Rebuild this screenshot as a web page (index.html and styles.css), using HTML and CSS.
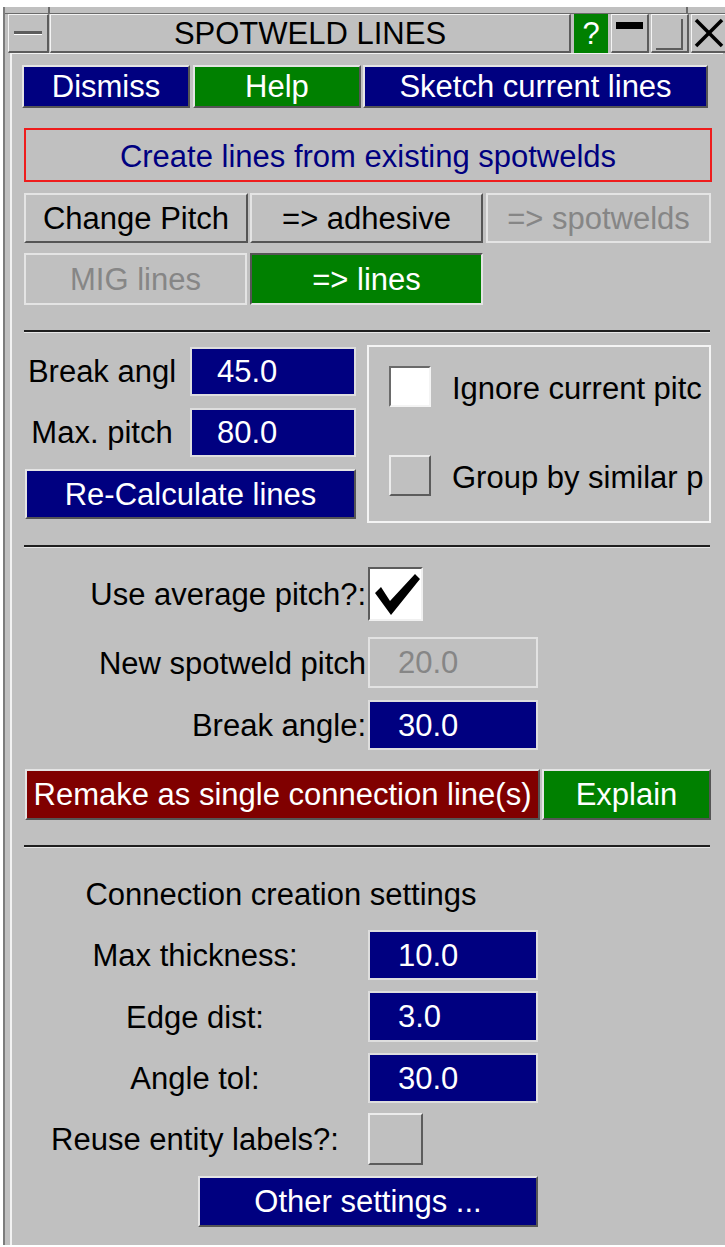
FILE: index.html
```html
<!doctype html>
<html lang="en">
<head>
  <meta charset="utf-8">
  <title>Spotweld Lines</title>
<link rel="stylesheet" href="styles.css">
</head>
<body>
<div class="frame">
  <div class="frame-top">
    <span class="seg seg-left"></span>
    <span class="seg seg-mid"></span>
    <span class="seg seg-right"></span>
  </div>

  <div class="titlebar">
    <div class="tb-box tb-menu"><span class="dash"></span></div>
    <div class="tb-box tb-title">SPOTWELD LINES</div>
    <div class="tb-box tb-help">?</div>
    <div class="tb-box tb-min"><span class="bar"></span></div>
    <div class="tb-box tb-max"><span class="sq"></span></div>
    <div class="tb-box tb-close">
      <svg width="30" height="30" viewBox="0 0 30 30">
        <line x1="2" y1="2" x2="28" y2="28" stroke="#000" stroke-width="3.5"/>
        <line x1="28" y1="2" x2="2" y2="28" stroke="#000" stroke-width="3.5"/>
      </svg>
    </div>
  </div>

  <div class="panel">
    <div class="toolbar">
      <div class="btn blue w-dismiss">Dismiss</div>
      <div class="btn green w-help">Help</div>
      <div class="btn blue w-sketch">Sketch current lines</div>
    </div>

    <div class="banner">Create lines from existing spotwelds</div>

    <div class="btn-row row-a">
      <div class="btn grey w-change">Change Pitch</div>
      <div class="btn grey w-adh">=&gt; adhesive</div>
      <div class="btn off w-spot">=&gt; spotwelds</div>
    </div>
    <div class="btn-row row-b">
      <div class="btn off w-mig">MIG lines</div>
      <div class="btn green pressed w-lines">=&gt; lines</div>
    </div>

    <div class="sep sep-1"></div>

    <div class="calc">
      <div class="calc-left">
        <div class="calc-label">Break angl</div>
        <div class="field blue h49">45.0</div>
        <div class="calc-label">Max. pitch</div>
        <div class="field blue h49">80.0</div>
        <div class="btn blue recalc">Re-Calculate lines</div>
      </div>
      <div class="group">
        <div class="group-row">
          <span class="check white"></span>
          <span class="group-text">Ignore current pitc</span>
        </div>
        <div class="group-row second">
          <span class="check raised"></span>
          <span class="group-text">Group by similar p</span>
        </div>
      </div>
    </div>

    <div class="sep sep-2"></div>

    <div class="pitch">
      <div class="lbl-right">Use average pitch?:</div>
      <div class="tick-box">
        <svg width="51" height="50" viewBox="0 0 51 50">
          <polygon points="5,24 11,18 20,32 45,5 50,10 21,46" fill="#000"/>
        </svg>
      </div>
      <div class="lbl-right r2">New spotweld pitch</div>
      <div class="field off-field r2 h51">20.0</div>
      <div class="lbl-right r3">Break angle:</div>
      <div class="field blue r3 h50">30.0</div>
    </div>

    <div class="remake-row">
      <div class="btn red w-remake">Remake as single connection line(s)</div>
      <div class="btn green w-explain">Explain</div>
    </div>

    <div class="sep sep-3"></div>

    <div class="settings">
      <div class="settings-title">Connection creation settings</div>
      <div class="lbl-center s1">Max thickness:</div>
      <div class="field blue s1 h50">10.0</div>
      <div class="lbl-center s2">Edge dist:</div>
      <div class="field blue s2 h51">3.0</div>
      <div class="lbl-center s3">Angle tol:</div>
      <div class="field blue s3 h50">30.0</div>
      <div class="lbl-center s4">Reuse entity labels?:</div>
      <span class="check raised big s4"></span>
      <div class="btn blue other">Other settings ...</div>
    </div>
  </div>
</div>
</body>
</html>
```
FILE: styles.css
```css
* {
  box-sizing: border-box;
}

body {
  margin: 0;
  background: #fff;
  font-family: "Liberation Sans", Arial, sans-serif;
  font-size: 31px;
  color: #000;
  overflow: hidden;
}

/* window frame */
.frame {
  margin: 7px 0 0 3px;
  width: 722px;
  height: 1238px;
  background: #c0c0c0;
  border-left: 2px solid #7c7c7c;
  padding-left: 5px;
}

.frame-top {
  display: flex;
  height: 7px;
  margin-left: -5px;
  border-bottom: 1px solid #6a6a6a;
}

.seg {
  display: block;
  height: 100%;
}

.seg-left {
  width: 45px;
  border-right: 2px solid #6a6a6a;
}

.seg-mid {
  width: 638px;
  border-right: 2px solid #6a6a6a;
}

/* title bar */
.titlebar {
  display: flex;
  height: 39px;
  margin-left: -2px;
}

.tb-box {
  display: flex;
  align-items: center;
  justify-content: center;
  height: 39px;
  border-top: 1px solid #f4f4f4;
  border-left: 1px solid #f4f4f4;
  border-right: 2px solid #5c5c5c;
  border-bottom: 2px solid #5c5c5c;
  flex-shrink: 0;
}

.tb-menu {
  width: 41px;
}

.dash {
  display: block;
  width: 28px;
  height: 4px;
  background: #5c5c5c;
  border-bottom: 1px solid #fff;
}

.tb-title {
  width: 521px;
  margin-left: 1px;
  line-height: 36px;
  padding-top: 2px;
}

.tb-help {
  width: 34px;
  margin-left: 3px;
  background: #008000;
  color: #fff;
  border: none;
}

.tb-min {
  width: 38px;
  margin-left: 3px;
  align-items: flex-start;
}

.bar {
  display: block;
  width: 27px;
  height: 7px;
  margin-top: 7px;
  background: #000;
}

.tb-max {
  width: 38px;
  margin-left: 2px;
  align-items: flex-end;
  justify-content: flex-end;
  padding: 0 4px 1px 0;
}

.sq {
  display: block;
  width: 27px;
  height: 31px;
  border-right: 2px solid #5c5c5c;
  border-bottom: 2px solid #5c5c5c;
}

.tb-close {
  width: 37px;
  margin-left: 2px;
}

/* main panel */
.panel {
  width: 713px;
  height: 1192px;
  margin-left: 0;
  border-left: 2px solid #f2f2f2;
  border-top: 1px solid #f2f2f2;
  padding: 11px 11px 0 12px;
}

.btn {
  display: flex;
  align-items: center;
  justify-content: center;
  white-space: nowrap;
  border: 2px solid;
  border-color: #e4e4e4 #555 #555 #e4e4e4;
  padding-top: 1px;
  flex-shrink: 0;
}

.blue {
  background: #000080;
  color: #fff;
}

.green {
  background: #008000;
  color: #fff;
}

.red {
  background: #800000;
  color: #fff;
}

.grey {
  background: #c0c0c0;
}

.off {
  color: #868686;
  border-color: #e4e4e4;
}

.pressed {
  border-color: #555 #e4e4e4 #e4e4e4 #555;
}

.toolbar {
  display: flex;
  height: 43px;
  margin-left: -2px;
}

.w-dismiss { width: 168px; }
.w-help { width: 168px; margin-left: 3px; }
.w-sketch { width: 345px; margin-left: 2px; }

.banner {
  margin-top: 20px;
  height: 54px;
  border: 2px solid #ee1c1c;
  color: #000080;
  display: flex;
  align-items: center;
  justify-content: center;
  padding-top: 3px;
}

.btn-row {
  display: flex;
}

.row-a {
  margin-top: 11px;
  height: 50px;
}

.row-b {
  margin-top: 10px;
  height: 52px;
}

.w-change { width: 224px; }
.w-adh { width: 233px; margin-left: 2px; }
.w-spot { width: 225px; margin-left: 3px; }
.w-mig { width: 223px; }
.w-lines { width: 233px; margin-left: 3px; }

.sep {
  width: 686px;
  height: 3px;
  border-top: 2px solid #1e1e1e;
  border-bottom: 1px solid #e6e6e6;
}

.sep-1 { margin-top: 25px; }
.sep-2 { margin-top: 22px; }
.sep-3 { margin-top: 25px; }

/* break angle / pitch block */
.calc {
  display: flex;
  margin-top: 12px;
  height: 178px;
}

.calc-left {
  display: grid;
  grid-template-columns: 156px 166px;
  grid-template-rows: 49px 49px 50px;
  column-gap: 10px;
  row-gap: 12px;
  width: 333px;
  padding-top: 2px;
  align-content: start;
}

.calc-label {
  text-align: center;
  align-self: center;
  padding-top: 1px;
}

.field {
  display: flex;
  align-items: center;
  padding-left: 28px;
  padding-top: 1px;
  border: 2px solid #dedede;
}

.calc-left .field {
  padding-left: 25px;
}

.off-field {
  color: #868686;
  border-color: #e2e2e2;
}

.h49 { height: 49px; }
.h50 { height: 50px; }
.h51 { height: 51px; }

.recalc {
  grid-column: 1 / 3;
  margin-left: 1px;
  height: 50px;
}

.group {
  width: 344px;
  margin-left: 10px;
  border: 2px solid #f4f4f4;
  padding: 19px 0 0 20px;
  overflow: hidden;
}

.group-row {
  display: flex;
  align-items: center;
  height: 41px;
  white-space: nowrap;
}

.group-row.second {
  margin-top: 48px;
}

.check {
  display: block;
  width: 42px;
  height: 41px;
  flex-shrink: 0;
  border: 2px solid;
}

.check.white {
  background: #fff;
  border-color: #6a6a6a #f4f4f4 #f4f4f4 #6a6a6a;
}

.check.raised {
  border-color: #ececec #5c5c5c #5c5c5c #ececec;
}

.group-text {
  margin-left: 21px;
  padding-top: 4px;
}

/* average pitch block */
.pitch {
  display: grid;
  grid-template-columns: 342px 170px;
  column-gap: 2px;
  margin-top: 19px;
}

.lbl-right {
  text-align: right;
  align-self: center;
  white-space: nowrap;
  padding-top: 2px;
}

.tick-box {
  width: 55px;
  height: 54px;
  background: #fff;
  border: 2px solid;
  border-color: #5c5c5c #f0f0f0 #f0f0f0 #5c5c5c;
}

.tick-box svg {
  display: block;
}

.r2 { margin-top: 16px; }
.r3 { margin-top: 12px; }

.remake-row {
  display: flex;
  margin-top: 19px;
  height: 51px;
}

.w-remake { width: 515px; margin-left: 1px; }
.w-explain { width: 169px; margin-left: 2px; }

/* connection settings block */
.settings {
  display: grid;
  grid-template-columns: 342px 170px;
  column-gap: 2px;
}

.settings-title {
  grid-column: 1 / 3;
  text-align: center;
  height: 30px;
  line-height: 30px;
  margin-top: 32px;
  margin-bottom: 20px;
}

.lbl-center {
  text-align: center;
  align-self: center;
  white-space: nowrap;
  padding-top: 2px;
}

.s2, .s3 { margin-top: 11px; }
.s4 { margin-top: 10px; }

.check.big {
  width: 55px;
  height: 52px;
}

.other {
  grid-column: 1 / 3;
  justify-self: end;
  width: 340px;
  height: 51px;
  margin-top: 11px;
}
```
